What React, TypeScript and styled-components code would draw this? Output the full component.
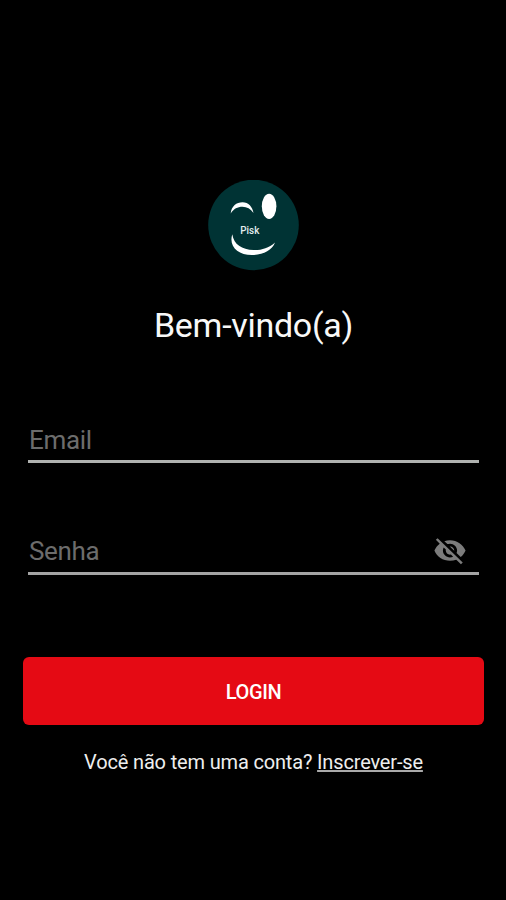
import React from "react";
import styled, { createGlobalStyle } from "styled-components";

const GlobalStyle = createGlobalStyle`
  * { box-sizing: border-box; }
  html, body { margin: 0; background: #000; }
  body, input, button { font-family: Roboto, "Liberation Sans", sans-serif; }
`;

const Screen = styled.main`
  display: flex;
  flex-direction: column;
  align-items: center;
  width: 506px;
  height: 900px;
  padding: 180px 22px 0 23px;
  overflow: hidden;
  background: #000;
`;

const Logo = styled.svg`
  display: block;
  width: 92px;
  height: 91px;
  flex: none;
`;

const Title = styled.h1`
  margin: 34px 0 0;
  height: 40px;
  font-size: 34px;
  line-height: 40px;
  font-weight: 400;
  letter-spacing: -0.28px;
  color: #f8f8f8;
  white-space: nowrap;
`;

const Form = styled.form`
  display: flex;
  flex-direction: column;
  width: 100%;
`;

const Field = styled.label<{ $gap: number; $drop: number; $line: string }>`
  display: flex;
  align-items: center;
  height: 48px;
  margin: ${(p) => p.$gap}px 5px 0;
  padding-top: ${(p) => p.$drop}px;
  border-bottom: 3px solid ${(p) => p.$line};
`;

const Input = styled.input`
  flex: 1;
  min-width: 0;
  height: 36px;
  padding: 0 0 0 1px;
  border: 0;
  outline: 0;
  background: transparent;
  color: #fff;
  font-size: 26px;
  letter-spacing: -0.35px;
  &::placeholder { color: #6c6c6c; opacity: 1; }
`;

const Toggle = styled.svg`
  width: 34px;
  height: 33px;
  margin-right: 12px;
  fill: #7c7c7c;
`;

const LoginButton = styled.button`
  height: 68px;
  margin-top: 82px;
  padding: 1px 0 0;
  border: 0;
  border-radius: 6px;
  background: #e50a14;
  color: #fff;
  font-size: 20px;
  font-weight: 500;
  letter-spacing: -0.4px;
`;

const Prompt = styled.p`
  margin: 25px 0 0;
  font-size: 20px;
  line-height: 24px;
  letter-spacing: -0.16px;
  color: #eee;
  white-space: nowrap;
`;

const SignUp = styled.a`
  color: inherit;
  text-decoration: underline;
  text-decoration-color: #aaa;
  text-decoration-thickness: 2px;
  text-decoration-skip-ink: none;
  text-underline-offset: 1px;
`;

export default function App() {
  return (
    <>
      <GlobalStyle />
      <Screen>
        <Logo viewBox="0 0 92 91" aria-label="Pisk">
          <circle cx="45.500" cy="45" r="45.3" fill="#003334" />
          <path d="M22.700 33.4C23.500 26.2 28.500 22.300 34.500 22.300c6 0 10 4.700 11 10.700-3-4.300-6.500-6.300-11-6.300-5 0-8.800 2-11.800 6.700Z" fill="#fff" />
          <ellipse cx="61.100" cy="26.300" rx="7.300" ry="12.600" fill="#fff" />
          <path d="M24.300 54.200C20.500 66 29.500 75 44 75 55 75 64 70.500 67 62.500 60.500 68.500 53 70.300 45.500 70 34 69.500 25.700 64.500 24.300 54.200Z" fill="#fff" />
          <text x="32.300" y="53.700" fill="#e4eded" fontSize="10.500" fontWeight="500" fontFamily="Roboto, sans-serif" textLength="19" lengthAdjust="spacingAndGlyphs">Pisk</text>
        </Logo>
        <Title>Bem-vindo(a)</Title>
        <Form onSubmit={(e) => e.preventDefault()}>
          <Field $gap={70} $drop={5} $line="#b0b2b0">
            <Input type="email" placeholder="Email" />
          </Field>
          <Field $gap={64} $drop={2} $line="#a4a4a4">
            <Input type="password" placeholder="Senha" />
            <Toggle viewBox="0 0 24 24" preserveAspectRatio="none">
              <path d="M12 7c2.760 0 5 2.240 5 5 0 .65-.13 1.260-.36 1.830l2.920 2.920c1.510-1.260 2.700-2.890 3.430-4.750-1.730-4.390-6-7.500-11-7.500-1.400 0-2.740.25-3.980.7l2.160 2.160C10.740 7.130 11.350 7 12 7zM2 4.270l2.280 2.280.46.46C3.080 8.300 1.780 10.020 1 12c1.730 4.390 6 7.500 11 7.500 1.550 0 3.030-.3 4.380-.84l.42.42L19.730 22 21 20.730 3.270 3 2 4.270zM7.530 9.800l1.550 1.550c-.05.21-.08.43-.08.65 0 1.660 1.340 3 3 3 .22 0 .44-.03.65-.08l1.550 1.550c-.67.33-1.410.53-2.200.53-2.760 0-5-2.240-5-5 0-.79.2-1.530.53-2.200zm4.310-.78l3.150 3.150.02-.16c0-1.660-1.340-3-3-3l-.17.01z" />
            </Toggle>
          </Field>
          <LoginButton type="submit">LOGIN</LoginButton>
        </Form>
        <Prompt>
          Você não tem uma conta? <SignUp href="#">Inscrever-se</SignUp>
        </Prompt>
      </Screen>
    </>
  );
}
